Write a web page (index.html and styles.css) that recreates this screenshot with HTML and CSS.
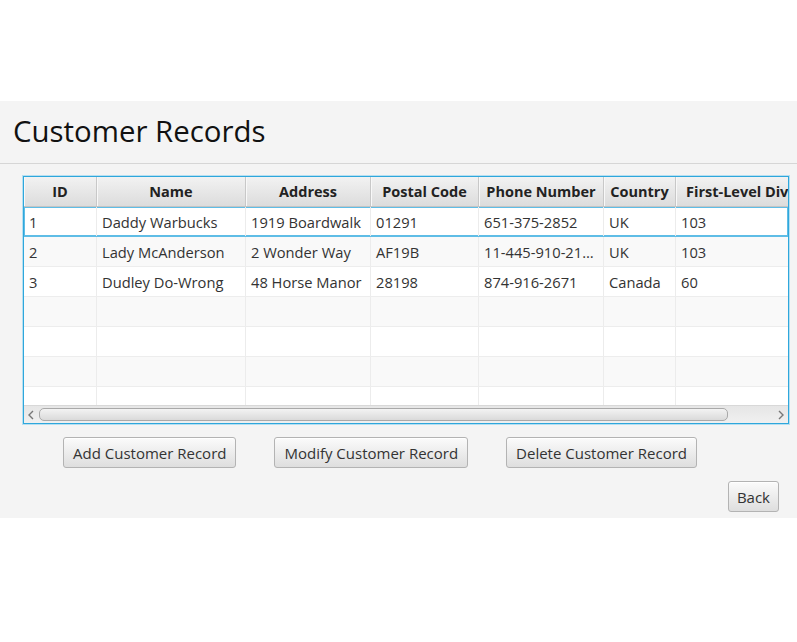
FILE: index.html
```html
<!DOCTYPE html>
<html>
<head>
<meta charset="utf-8">
<link rel="stylesheet" href="styles.css">
</head>
<body>
<div class="window">
  <div class="title-bar"><h1 class="title">Customer Records</h1></div>
  <div class="table-area">
    <div class="table">
      <div class="viewport">
        <div class="row header">
          <div class="cell">ID</div>
          <div class="cell">Name</div>
          <div class="cell">Address</div>
          <div class="cell">Postal Code</div>
          <div class="cell">Phone Number</div>
          <div class="cell">Country</div>
          <div class="cell last">First-Level Division</div>
        </div>
        <div class="row odd focused">
          <div class="cell">1</div>
          <div class="cell">Daddy Warbucks</div>
          <div class="cell">1919 Boardwalk</div>
          <div class="cell">01291</div>
          <div class="cell">651-375-2852</div>
          <div class="cell">UK</div>
          <div class="cell last">103</div>
        </div>
        <div class="row even">
          <div class="cell">2</div>
          <div class="cell">Lady McAnderson</div>
          <div class="cell">2 Wonder Way</div>
          <div class="cell">AF19B</div>
          <div class="cell">11-445-910-21…</div>
          <div class="cell">UK</div>
          <div class="cell last">103</div>
        </div>
        <div class="row odd">
          <div class="cell">3</div>
          <div class="cell">Dudley Do-Wrong</div>
          <div class="cell">48 Horse Manor</div>
          <div class="cell">28198</div>
          <div class="cell">874-916-2671</div>
          <div class="cell">Canada</div>
          <div class="cell last">60</div>
        </div>
        <div class="row even"><div class="cell"></div><div class="cell"></div><div class="cell"></div><div class="cell"></div><div class="cell"></div><div class="cell"></div><div class="cell last"></div></div>
        <div class="row odd"><div class="cell"></div><div class="cell"></div><div class="cell"></div><div class="cell"></div><div class="cell"></div><div class="cell"></div><div class="cell last"></div></div>
        <div class="row even"><div class="cell"></div><div class="cell"></div><div class="cell"></div><div class="cell"></div><div class="cell"></div><div class="cell"></div><div class="cell last"></div></div>
        <div class="row odd"><div class="cell"></div><div class="cell"></div><div class="cell"></div><div class="cell"></div><div class="cell"></div><div class="cell"></div><div class="cell last"></div></div>
      </div>
      <div class="hscroll">
        <span class="arrow"><svg width="8" height="10" viewBox="0 0 8 10"><path d="M6 1 L2 5 L6 9" fill="none" stroke="#777" stroke-width="1.4"/></svg></span>
        <div class="track"><div class="thumb"></div></div>
        <span class="arrow"><svg width="8" height="10" viewBox="0 0 8 10"><path d="M2 1 L6 5 L2 9" fill="none" stroke="#777" stroke-width="1.4"/></svg></span>
      </div>
    </div>
  </div>
  <div class="actions">
    <button class="btn">Add Customer Record</button>
    <button class="btn">Modify Customer Record</button>
    <button class="btn">Delete Customer Record</button>
  </div>
  <div class="back-row">
    <button class="btn back">Back</button>
  </div>
</div>
</body>
</html>
```

FILE: styles.css
```css
html, body {
  margin: 0;
  padding: 0;
  background: #ffffff;
}
body {
  font-family: "Open Sans", "Noto Sans", sans-serif;
  color: #333;
}
.window {
  margin-top: 101px;
  height: 417px;
  background: #f4f4f4;
  display: flex;
  flex-direction: column;
}
.title-bar {
  height: 63px;
  border-bottom: 1px solid #d6d6d6;
  box-sizing: border-box;
  padding-left: 13px;
  padding-bottom: 3px;
  display: flex;
  align-items: center;
}
.title {
  margin: 0;
  font-weight: normal;
  font-size: 29.4px;
  color: #111;
}
.table-area {
  padding: 12px 0 0 23px;
}
.table {
  width: 766px;
  height: 248px;
  box-sizing: border-box;
  border: 1px solid #2ea7dc;
  box-shadow: 0 0 0 1px #b6dff1;
  background: #fff;
  display: flex;
  flex-direction: column;
  overflow: hidden;
}
.viewport {
  flex: 1;
  overflow: hidden;
}
.row {
  display: grid;
  grid-template-columns: 73px 149px 125px 108px 125px 72px 150px;
  height: 30px;
  box-sizing: border-box;
  border-bottom: 1px solid #ededed;
  font-size: 14.7px;
}
.row .cell {
  border-right: 1px solid #ececec;
  padding-left: 5px;
  display: flex;
  align-items: center;
  white-space: nowrap;
  overflow: hidden;
}
.row.odd { background: #ffffff; }
.row.even { background: #f9f9f9; }
.row.focused {
  box-shadow: inset 0 0 0 1px #5fbde6;
  border-bottom-color: #5fbde6;
}
.row.header {
  height: 30px;
  background: linear-gradient(#f2f2f2, #dcdcdc);
  border-bottom: 1px solid #c4c4c4;
  font-weight: bold;
  font-size: 14.5px;
  color: #222;
}
.row.header .cell {
  justify-content: center;
  padding-left: 0;
  border-right: 1px solid #c8c8c8;
  box-shadow: inset 1px 0 0 #f8f8f8;
}
.row.header .cell.last {
  justify-content: flex-start;
  padding-left: 10px;
}
.hscroll {
  height: 17px;
  background: linear-gradient(#e6e6e6, #f0f0f0);
  border-top: 1px solid #d8d8d8;
  display: flex;
  align-items: center;
}
.arrow {
  width: 14px;
  display: flex;
  justify-content: center;
  align-items: center;
}
.track {
  flex: 1;
  height: 17px;
  display: flex;
  align-items: center;
}
.thumb {
  margin-left: 1px;
  width: 689px;
  height: 13px;
  box-sizing: border-box;
  border: 1px solid #a9a9a9;
  border-radius: 5px;
  background: linear-gradient(#f3f3f3, #dadada);
}
.actions {
  display: flex;
  gap: 38px;
  padding: 13px 0 0 63px;
}
.btn {
  font-family: "Open Sans", "Noto Sans", sans-serif;
  font-size: 15px;
  color: #333;
  height: 31px;
  padding: 0 9px;
  border: 1px solid #b3b3b3;
  border-radius: 3px;
  background: linear-gradient(#fbfbfb, #dedede);
  box-shadow: inset 0 1px 0 #ffffff;
}
.btn.back {
  padding: 0 8px;
}
.back-row {
  display: flex;
  justify-content: flex-end;
  padding: 13px 18px 0 0;
}
```
